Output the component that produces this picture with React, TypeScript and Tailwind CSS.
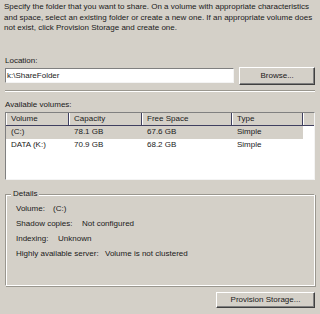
import React from "react";

const cols = [
  { name: "Volume", w: "w-[63px]" },
  { name: "Capacity", w: "w-[73px]" },
  { name: "Free Space", w: "w-[90px]" },
  { name: "Type", w: "w-[71px]" },
];

const rows = [
  ["(C:)", "78.1 GB", "67.6 GB", "Simple"],
  ["DATA (K:)", "70.9 GB", "68.2 GB", "Simple"],
];

export default function App() {
  return (
    <div
      className="w-[320px] h-[314px] bg-[#d4d0c8] text-[#1a1a1a] text-[8px] overflow-hidden relative"
      style={{ fontFamily: '"Liberation Sans", Arial, sans-serif' }}
    >
      <div className="px-[4px] pt-[2px] leading-[10.5px] whitespace-nowrap">
        <p>
          Specify the folder that you want to share. On a volume with appropriate characteristics
          <br />
          and space, select an existing folder or create a new one. If an appropriate volume does
          <br />
          not exist, click Provision Storage and create one.
        </p>
      </div>

      <div className="px-[5px] mt-[22px] leading-[10px]">Location:</div>
      <div className="flex items-center px-[5px] mt-[1px]">
        <div className="w-[230px] h-[15px] bg-white border-t border-l border-[#808080] border-b border-r border-b-[#f4f4f4] border-r-[#f4f4f4] flex items-center pl-[1px] leading-[10px]">
          k:\ShareFolder
        </div>
        <div className="ml-[5px] w-[76px] h-[18px] flex items-center justify-center border border-t-white border-l-white border-b-[#404040] border-r-[#404040] shadow-[inset_-1px_-1px_0_#808080]">
          Browse...
        </div>
      </div>

      <div className="mx-[5px] mt-[5px] h-[2px] border-t border-[#9a978f] border-b border-b-white" />

      <div className="px-[5px] mt-[8px] leading-[10px]">Available volumes:</div>
      <div className="mx-[5px] mt-[2px] h-[68px] bg-white border border-t-[#808080] border-l-[#808080] border-b-[#f4f4f4] border-r-[#f4f4f4]">
        <div className="flex h-[13px] bg-[#d4d0c8] border-b border-[#404060]">
          {cols.map((c) => (
            <div
              key={c.name}
              className={`${c.w} h-full flex items-center pl-[5px] border-r border-[#404060] shadow-[inset_1px_0_0_#fff] leading-[10px]`}
            >
              {c.name}
            </div>
          ))}
          <div className="flex-1 h-full shadow-[inset_1px_0_0_#fff]" />
        </div>
        {rows.map((r, i) => (
          <div
            key={i}
            className={`flex h-[13px] w-[297px] items-center ${i === 0 ? "bg-[#d4d0c8]" : ""}`}
          >
            {r.map((v, j) => (
              <div key={j} className={`${cols[j].w} pl-[5px] leading-[10px]`}>
                {v}
              </div>
            ))}
          </div>
        ))}
      </div>

      <div className="relative mx-[5px] mt-[14px] h-[92px] border border-t-[#9a978f] border-l-[#9a978f] border-b-white border-r-white shadow-[inset_1px_1px_0_#fff,1px_1px_0_#9a978f]">
        <div className="absolute left-[5px] top-[-6px] px-[2px] bg-[#d4d0c8] leading-[10px]">Details</div>
        <div className="pl-[10px] pt-[9px] leading-[10px] flex flex-col gap-[5px] whitespace-nowrap">
          <div className="flex">
            <span className="w-[37px]">Volume:</span>
            <span>(C:)</span>
          </div>
          <div className="flex">
            <span className="w-[66px]">Shadow copies:</span>
            <span>Not configured</span>
          </div>
          <div className="flex">
            <span className="w-[42px]">Indexing:</span>
            <span>Unknown</span>
          </div>
          <div className="flex">
            <span className="w-[89px]">Highly available server:</span>
            <span>Volume is not clustered</span>
          </div>
        </div>
      </div>

      <div className="flex justify-end pr-[5px] mt-[6px]">
        <div className="w-[99px] h-[16px] flex items-center justify-center border border-t-white border-l-white border-b-[#404040] border-r-[#404040] shadow-[inset_-1px_-1px_0_#808080] leading-[10px]">
          Provision Storage...
        </div>
      </div>
    </div>
  );
}
